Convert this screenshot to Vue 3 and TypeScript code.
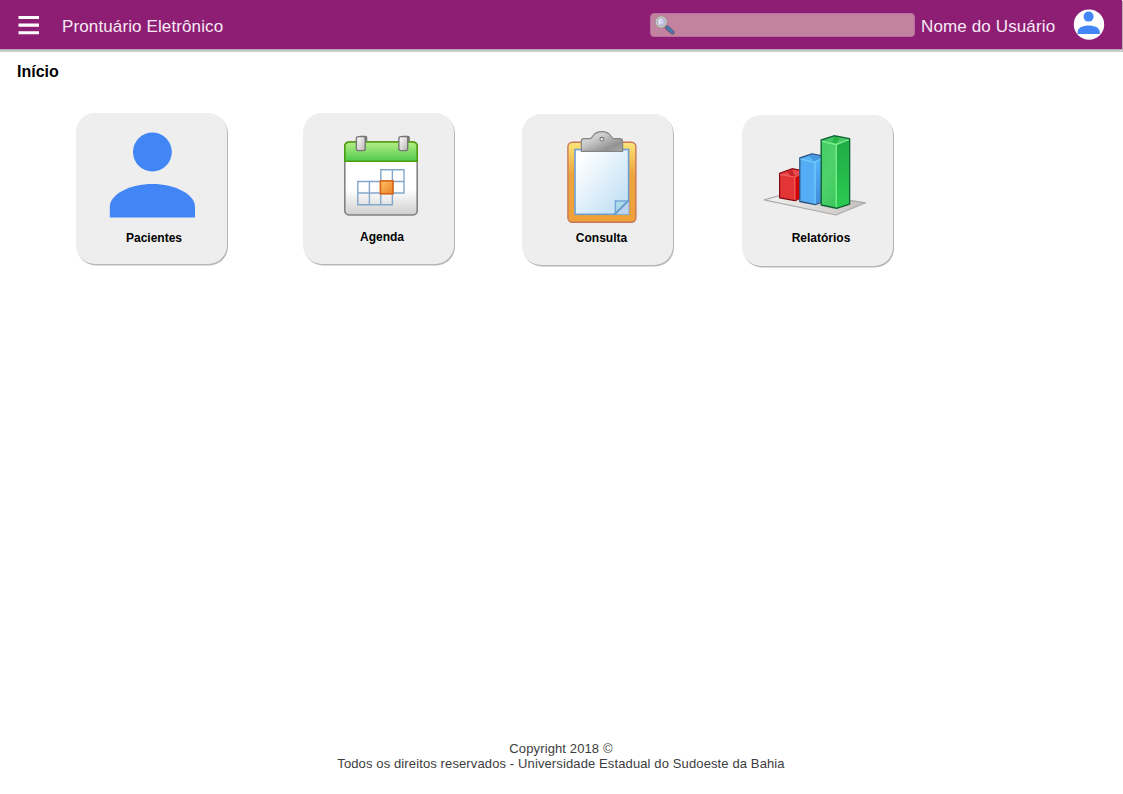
<script setup lang="ts">
import { ref } from 'vue'

interface Card {
  id: string
  label: string
}

const cards: Card[] = [
  { id: 'pacientes', label: 'Pacientes' },
  { id: 'agenda', label: 'Agenda' },
  { id: 'consulta', label: 'Consulta' },
  { id: 'relatorios', label: 'Relatórios' },
]
const query = ref('')
</script>

<template>
  <div class="page">
    <header class="bar">
      <button class="menu" aria-label="Menu">
        <svg viewBox="0 0 22 20" width="22" height="20">
          <path d="M.5 2.5 H21 M.5 10.1 H21 M.5 17.7 H21" stroke="#fff" stroke-width="3.1" />
        </svg>
      </button>
      <div class="brand">Prontuário Eletrônico</div>
      <label class="search">
        <svg class="lens" viewBox="0 0 22 20" width="22" height="20">
          <defs>
            <radialGradient id="lensGlass"><stop offset="0" stop-color="#dedcf4" /><stop offset="1" stop-color="#aaa5d2" /></radialGradient>
          </defs>
          <path d="M11.5 11.5 L14 14" stroke="#8d8790" stroke-width="2" />
          <path d="M13.2 12.6 L18.4 17.4" stroke="#6d526d" stroke-width="4.4" stroke-linecap="round" />
          <path d="M13.5 12.6 L18.2 17" stroke="#3f7fb6" stroke-width="2.8" stroke-linecap="round" />
          <circle cx="7.2" cy="7" r="5.2" fill="url(#lensGlass)" stroke="#908c8b" stroke-width="2.2" />
          <circle cx="7.2" cy="7" r="5" fill="none" stroke="#c9cbbd" stroke-width="1.4" />
          <path d="M5 9.5 L5.5 5 L8 4" fill="none" stroke="#f0effa" stroke-width="1.2" />
        </svg>
        <input v-model="query" type="text" aria-label="Pesquisar" />
      </label>
      <div class="user">Nome do Usuário</div>
      <svg class="avatar" viewBox="0 0 32 32" width="32" height="32">
        <circle cx="16" cy="15.6" r="15.2" fill="#fff" />
        <circle cx="15.6" cy="7.6" r="5" fill="#4285f4" />
        <path d="M4.6 25 V23 C4.6 14.4 26.8 14.4 26.8 23 V25 Z" fill="#4285f4" />
      </svg>
    </header>

    <main>
      <h1>Início</h1>
      <nav class="cards">
        <a v-for="card in cards" :key="card.id" class="card" :class="card.id">
          <svg v-if="card.id === 'pacientes'" viewBox="76 113 151 112" width="151" height="112">
            <circle cx="152.4" cy="152" r="19.4" fill="#4285f4" />
            <path d="M109.8 217.5 V207 C109.8 194 130 184 152.4 184 S195 194 195 207 V217.5 Z" fill="#4285f4" />
          </svg>

          <svg v-else-if="card.id === 'agenda'" viewBox="303 113 151 112" width="151" height="112">
            <defs>
              <linearGradient id="calPaper" x2="0" y2="1"><stop offset=".65" stop-color="#fff" /><stop offset="1" stop-color="#cfcfcf" /></linearGradient>
              <linearGradient id="calTop" x2="0" y2="1"><stop offset="0" stop-color="#b5ee84" /><stop offset="1" stop-color="#4fcb4d" /></linearGradient>
              <linearGradient id="calRing" x2="1" y2="1"><stop offset="0" stop-color="#fff" /><stop offset="1" stop-color="#bbb6b4" /></linearGradient>
              <linearGradient id="calDay" x2="1" y2="1"><stop offset="0" stop-color="#ffc369" /><stop offset="1" stop-color="#e87e25" /></linearGradient>
            </defs>
            <rect x="344.8" y="142" width="72.4" height="73" rx="4.5" fill="url(#calPaper)" stroke="#828282" stroke-width="1.6" />
            <path d="M344.8 161.3 V146.5 Q344.8 142 349.3 142 H412.7 Q417.2 142 417.2 146.5 V161.3 Z" fill="url(#calTop)" stroke="#4b9d0d" stroke-width="1.6" />
            <g stroke="#777" stroke-width="1.4">
              <path d="M359 141 V137.5 Q359 136.4 360 136.4 H365.5 Q366.6 136.4 366.6 137.5 V141" fill="#777" />
              <path d="M401.5 141 V137.5 Q401.5 136.4 402.5 136.4 H408 Q409.1 136.4 409.1 137.5 V141" fill="#777" />
              <rect x="356.4" y="136.6" width="8.8" height="14" rx="1.8" fill="url(#calRing)" />
              <rect x="398.9" y="136.6" width="8.8" height="14" rx="1.8" fill="url(#calRing)" />
            </g>
            <path d="M380.8 169.8 H404 V193 H392.4 V204.8 H357.8 V181.5 H380.8 Z M380.8 181.5 H404 M392.4 169.8 V193 M357.8 193 H392.4 M369.4 181.5 V204.8 M380.8 181.5 V204.8" fill="none" stroke="#83a6cd" stroke-width="1.4" />
            <rect x="380.4" y="180.9" width="12.6" height="12.9" fill="url(#calDay)" stroke="#d66216" stroke-width="1.6" />
          </svg>

          <svg v-else-if="card.id === 'consulta'" viewBox="522 114 151 112" width="151" height="112">
            <defs>
              <linearGradient id="board" x2="0" y2="1"><stop offset="0" stop-color="#fce678" /><stop offset=".4" stop-color="#eda43c" /><stop offset="1" stop-color="#f0a138" /></linearGradient>
              <linearGradient id="sheet" x2="1" y2="1"><stop offset=".1" stop-color="#fff" /><stop offset="1" stop-color="#b9dcf4" /></linearGradient>
              <linearGradient id="clip" x2="1" y2="1"><stop offset="0" stop-color="#ddd" /><stop offset=".35" stop-color="#ccc" /><stop offset=".75" stop-color="#929292" /><stop offset="1" stop-color="#aaa" /></linearGradient>
            </defs>
            <rect x="567.9" y="142.2" width="68" height="80" rx="4.5" fill="url(#board)" stroke="#c8775c" stroke-width="1.4" />
            <rect x="575" y="149.5" width="53.6" height="64.8" fill="url(#sheet)" stroke="#709ed0" stroke-width="1.6" />
            <path d="M628.6 200.5 V214.3 H614.5 Z" fill="#bcd5ef" />
            <path d="M628 201 H615.4 V214 Z" fill="#addbe9" stroke="#74a8d9" stroke-width="1.5" />
            <path d="M629 200 L614.5 214.5" stroke="#6c9dd0" stroke-width="2" />
            <path d="M581.3 151.3 V141.5 Q581.3 138.7 584 138.7 H589 Q591.5 138.7 592.5 136.5 Q595.2 131.6 601.8 131.6 T611.2 136.5 Q612.2 138.7 614.5 138.7 H620 Q622.6 138.7 622.6 141.5 V151.3 Z" fill="url(#clip)" stroke="#858585" stroke-width="1.2" />
            <circle cx="601.8" cy="139.3" r="1.9" fill="#e9e9e9" stroke="#777" stroke-width="1.1" />
          </svg>

          <svg v-else viewBox="742 115 151 112" width="151" height="112">
            <defs>
              <linearGradient id="floor" x2="1" y2="0"><stop offset="0" stop-color="#f4f4f4" /><stop offset="1" stop-color="#c4c0bc" /></linearGradient>
              <linearGradient id="blueSide" x2="0" y2="1"><stop offset="0" stop-color="#55b6fc" /><stop offset="1" stop-color="#438bd8" /></linearGradient>
              <linearGradient id="greenFront" x2="1" y2="1"><stop offset="0" stop-color="#42cf64" /><stop offset=".4" stop-color="#50d06c" /><stop offset="1" stop-color="#25c34b" /></linearGradient>
              <linearGradient id="greenSide" x2="0" y2="1"><stop offset="0" stop-color="#1faa46" /><stop offset="1" stop-color="#2bcb51" /></linearGradient>
            </defs>
            <path d="M764.2 199.8 L794 191.5 L865.5 202.8 L836 215 Z" fill="url(#floor)" stroke="#aaa" stroke-width="1.2" stroke-linejoin="round" />
            <g stroke-linejoin="round">
              <path d="M779.6 173.3 L792 168.7 L804 171 V196.5 L795 200.7 L779.6 197.8 Z" fill="#e33535" stroke="#860810" stroke-width="1.2" />
              <path d="M780.3 174.2 L792 169.5 L803 172 L794.8 176.7 Z" fill="#c9232b" />
              <path d="M780.5 174.4 L787 172 L791 175.5 Z M794.8 176 L792 169.5 L803 172 Z" fill="#eb4a4c" />
              <path d="M794.8 177 L803.5 172.5 V196.2 L795 199.8 Z" fill="#d40505" />
              <path d="M780.4 174.6 L794.8 177 V199.8 M794.8 177 L803 172.7" fill="none" stroke="#f36161" stroke-width="1.2" />
              <path d="M799.8 157.8 L812 153.8 L825 156.3 V201 L815.3 204.6 L799.8 201.5 Z" fill="#54adf5" stroke="#305480" stroke-width="1.3" />
              <path d="M800.6 158.5 L812.3 154.6 L824 157 L815 162 Z" fill="#4699e0" />
              <path d="M802 158.7 L809.5 156.2 L813.5 160.5 Z" fill="#5ab7fb" />
              <path d="M815 162.2 L824.2 157.2 V200.5 L815.3 203.8 Z" fill="url(#blueSide)" />
              <path d="M800.6 159 L815 162.2 V203.6 M815 162.2 L824 157.2" fill="none" stroke="#70cafe" stroke-width="1.4" />
              <path d="M821.2 140 L834 135.8 L849.6 138.6 V204 L836.6 208.3 L821.2 205 Z" fill="url(#greenFront)" stroke="#106232" stroke-width="1.4" />
              <path d="M822 140.7 L834 136.7 L848.8 139.4 L836.2 144.2 Z" fill="#28b649" />
              <path d="M823 140.8 L834 137 L832 142.7 Z M836 143.5 L840 138 L848 139.6 Z" fill="#45c86a" />
              <path d="M836.2 144.5 L848.8 139.7 V203.6 L836.5 207.4 Z" fill="url(#greenSide)" />
              <path d="M822 141.2 L836.2 144.5 V207 M836.2 144.5 L848.6 139.7" fill="none" stroke="#79ed89" stroke-width="1.4" />
            </g>
          </svg>
          <span class="label">{{ card.label }}</span>
        </a>
      </nav>
    </main>

    <footer>
      <p>Copyright 2018 ©</p>
      <p class="rights">Todos os direitos reservados - Universidade Estadual do Sudoeste da Bahia</p>
    </footer>
  </div>
</template>

<style>
body {
  margin: 0;
  background: #fff;
}
</style>

<style scoped>
.page {
  height: 794px;
  display: flex;
  flex-direction: column;
  overflow: hidden;
  font-family: "Liberation Sans", Arial, sans-serif;
}
.bar {
  box-sizing: border-box;
  width: 1122px;
  height: 49px;
  flex: none;
  display: flex;
  align-items: center;
  padding: 0 17px 0 18px;
  background: #8e1e74;
  color: #f7eaf4;
  box-shadow: 0 1px 0 #b1a7b1, 1px 1px 0 #b9aeb8, 0 3px 0 #c7cbca, 1px 3px 0 #c7cbca;
}
.menu {
  width: 22px;
  padding: 0;
  border: 0;
  background: none;
}
.menu svg {
  display: block;
}
.brand {
  width: 588px;
  margin-left: 22px;
  padding-top: 4px;
  font-size: 17px;
  line-height: 20px;
  letter-spacing: 0.12px;
}
.search {
  box-sizing: border-box;
  width: 265px;
  height: 24px;
  flex: none;
  display: flex;
  align-items: center;
  padding: 2px 3px;
  border: 1px solid #b7709b;
  border-radius: 4px;
  background: #c3829f;
}
.lens {
  flex: none;
}
input {
  flex: 1;
  min-width: 0;
  border: 0;
  outline: 0;
  background: transparent;
  color: #fff;
}
.user {
  width: 152px;
  margin-left: 6px;
  padding-top: 4px;
  font-size: 17px;
  line-height: 20px;
  letter-spacing: 0.13px;
  white-space: nowrap;
}
.avatar {
  flex: none;
}
h1 {
  margin: 13px 0 0 17px;
  font-size: 16px;
  line-height: 20px;
  color: #000;
}
.cards {
  display: flex;
  align-items: flex-start;
  padding: 31px 0 0 76px;
}
.card {
  width: 151px;
  height: 151px;
  border-radius: 19px;
  background: #eee;
  box-shadow: 1px 1.5px 0.5px #b7b7b7;
}
.card svg {
  display: block;
}
.agenda {
  margin-left: 76px;
}
.consulta {
  margin: 1px 0 0 68px;
}
.relatorios {
  margin: 2px 0 0 69px;
}
.label {
  display: block;
  margin-top: 6px;
  padding-left: 5px;
  text-align: center;
  font-size: 12px;
  line-height: 14px;
  font-weight: bold;
  color: #000;
}
.agenda .label {
  margin-top: 5px;
  padding-left: 7px;
}
.consulta .label {
  margin-top: 5px;
  padding-left: 8px;
}
.relatorios .label {
  margin-top: 4px;
  padding-left: 7px;
}
footer {
  margin-top: auto;
  padding-bottom: 23px;
  width: 1122px;
  text-align: center;
  font-size: 13px;
  line-height: 15px;
  letter-spacing: 0.12px;
  color: #3c3c3c;
}
p {
  margin: 0;
}
</style>
